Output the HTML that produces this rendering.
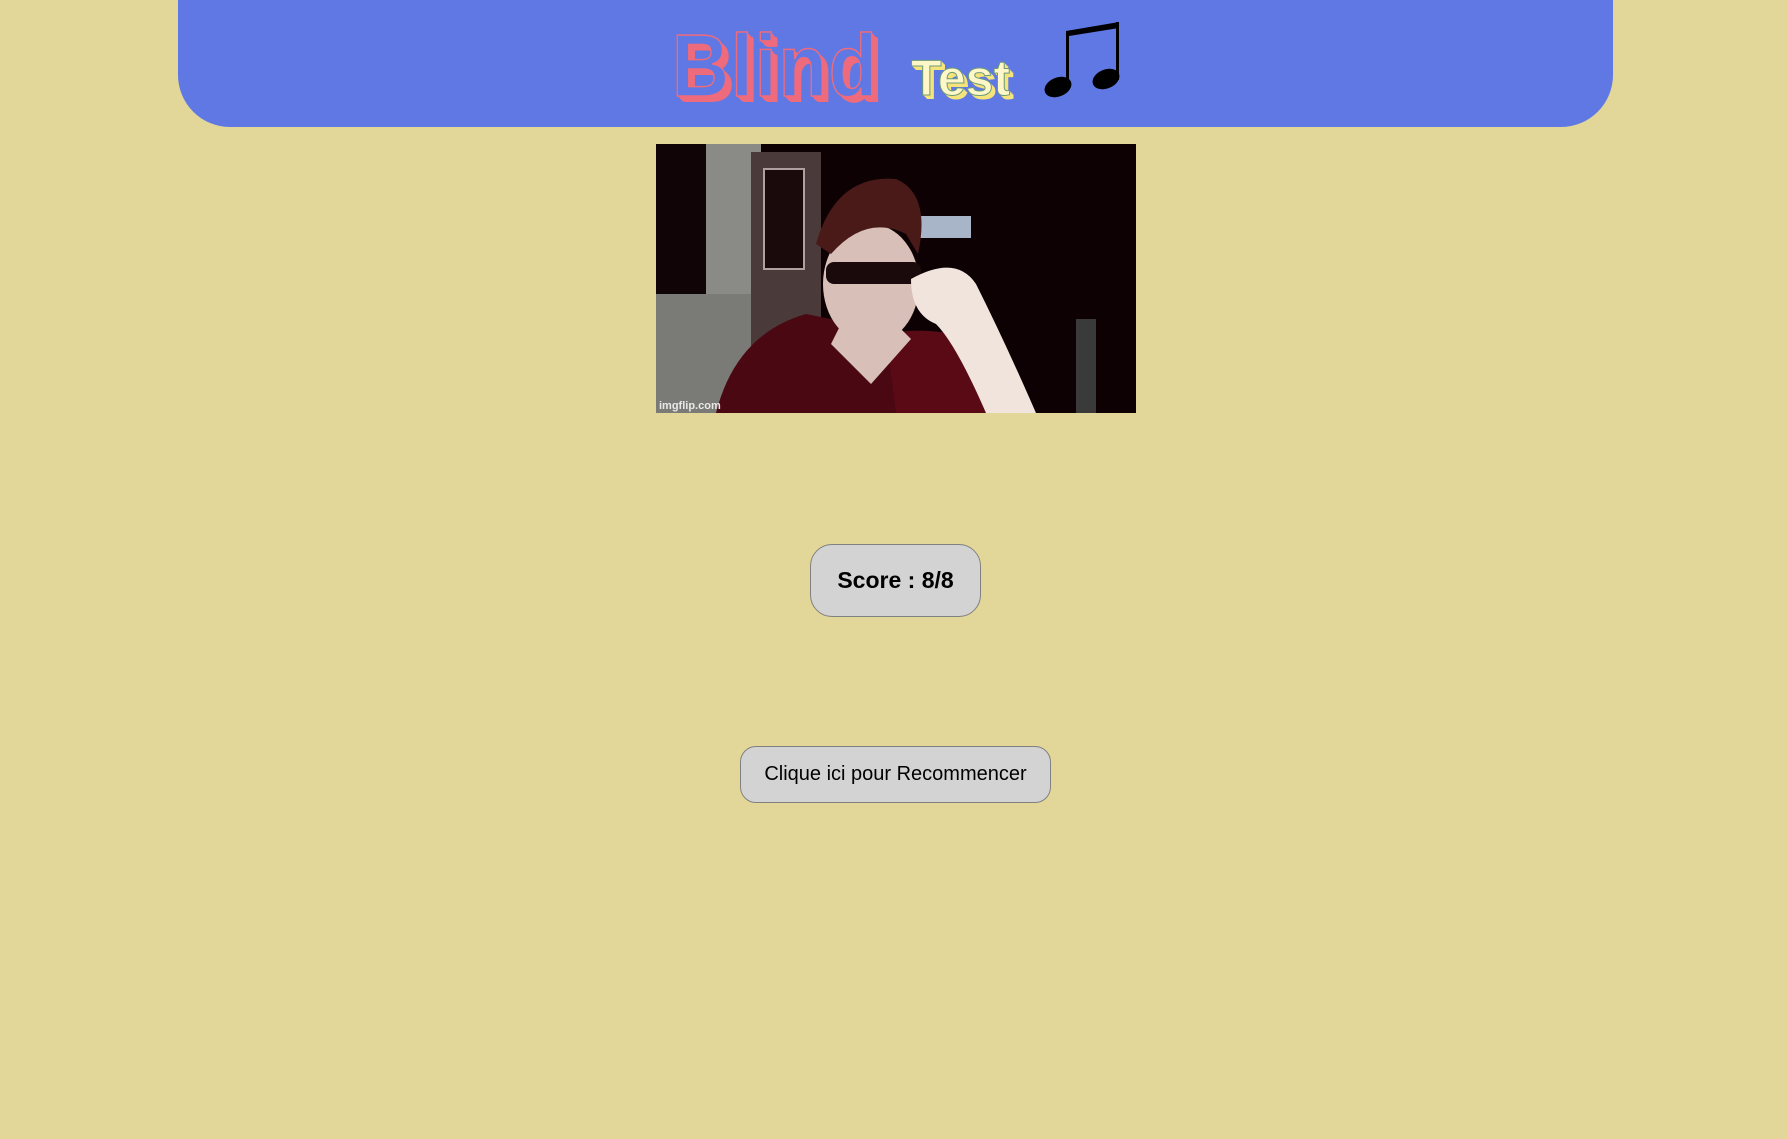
<!DOCTYPE html>
<html><head><meta charset="utf-8"><style>
html,body{margin:0;padding:0;}
body{width:1787px;height:1139px;background:#e2d798;position:relative;overflow:hidden;font-family:"Liberation Sans",Arial,sans-serif;}
.hdr{position:absolute;left:178px;top:-10px;width:1435px;height:137px;background:#6078e4;border-radius:0 0 52px 52px;}
.blind{position:absolute;left:672px;top:22px;font-size:88px;font-weight:bold;color:#6078e4;line-height:1;transform:scaleX(0.9);transform-origin:0 0;
 -webkit-text-stroke:1.5px #ee6b7c;
 text-shadow:1px 1px 0 #ee6b7c,2px 2px 0 #ee6b7c,3px 3px 0 #ee6b7c,4px 4px 0 #ee6b7c,5px 5px 0 #ee6b7c,6px 5px 0 #ee6b7c,7px 6px 0 #ee6b7c;letter-spacing:2px;}
.test{position:absolute;left:911px;top:53px;font-size:50px;font-weight:bold;color:#fff7c8;line-height:1;
 -webkit-text-stroke:1px #6a9a7a;
 text-shadow:1px 1px 0 #f5e47a,2px 2px 0 #f5e47a,3px 3px 0 #f5e47a,4px 4px 0 #f5e47a;}
.img{position:absolute;left:656px;top:144px;width:480px;height:269px;overflow:hidden;background:#0e0204;}
.btn{position:absolute;background:#d3d3d3;border:1px solid #808080;box-sizing:border-box;display:flex;align-items:center;justify-content:center;color:#000;}
</style></head><body>
<div class="hdr"></div>
<div class="blind">Blind</div>
<div class="test">Test</div>
<svg style="position:absolute;left:1040px;top:18px" width="90" height="85" viewBox="1040 18 90 85">
<path d="M1066 31 L1119 22 L1119 28 L1069 36 Z" fill="#000"/>
<rect x="1066" y="31" width="3" height="56" fill="#000"/>
<rect x="1116" y="22" width="3" height="58" fill="#000"/>
<ellipse cx="1058" cy="87" rx="14" ry="9.5" transform="rotate(-22 1058 87)" fill="#000"/>
<ellipse cx="1106" cy="79" rx="14" ry="9.5" transform="rotate(-22 1106 79)" fill="#000"/>
</svg>
<div class="img">
<svg width="480" height="269" viewBox="0 0 480 269">
<rect width="480" height="269" fill="#0d0103"/>
<rect x="0" y="0" width="55" height="269" fill="#1a0a0c"/>
<rect x="50" y="0" width="55" height="269" fill="#8a8a86"/>
<rect x="0" y="0" width="50" height="150" fill="#100406"/>
<rect x="0" y="150" width="105" height="119" fill="#7a7a76"/>
<rect x="95" y="8" width="70" height="200" fill="#4a3a3a"/>
<rect x="108" y="25" width="40" height="100" fill="#1a0a0c" stroke="#b0a0a0" stroke-width="2"/>
<rect x="255" y="72" width="60" height="22" fill="#a8b4c8"/>
<path d="M60 269 Q80 190 150 170 L200 180 Q240 220 270 269 Z" fill="#4a0812"/>
<path d="M230 190 Q280 180 330 200 L360 269 L240 269 Z" fill="#5a0a14"/>
<ellipse cx="215" cy="140" rx="48" ry="60" fill="#d8c0b8"/>
<path d="M160 100 Q180 30 240 35 Q275 50 262 110 L250 90 Q210 70 175 110 Z" fill="#4a1a18"/>
<rect x="170" y="118" width="95" height="22" rx="8" fill="#1a0a0c"/>
<path d="M175 200 L215 240 L255 195 L230 170 L190 170 Z" fill="#d8c0b8"/>
<path d="M255 135 Q300 110 320 140 Q350 200 380 269 L330 269 Q300 200 280 180 Q255 170 255 135Z" fill="#f0e4dc"/>
<rect x="420" y="175" width="20" height="94" fill="#3a3a3a"/>
<text x="3" y="265" font-family="Liberation Sans,Arial,sans-serif" font-size="11" font-weight="bold" fill="#e8e8e8">imgflip.com</text>
</svg>
</div>
<div class="btn" style="left:810px;top:544px;width:171px;height:73px;border-radius:22px;font-weight:bold;font-size:23px;">Score : 8/8</div>
<div class="btn" style="left:740px;top:746px;width:311px;height:57px;border-radius:16px;font-size:20px;">Clique ici pour Recommencer</div>
</body></html>
